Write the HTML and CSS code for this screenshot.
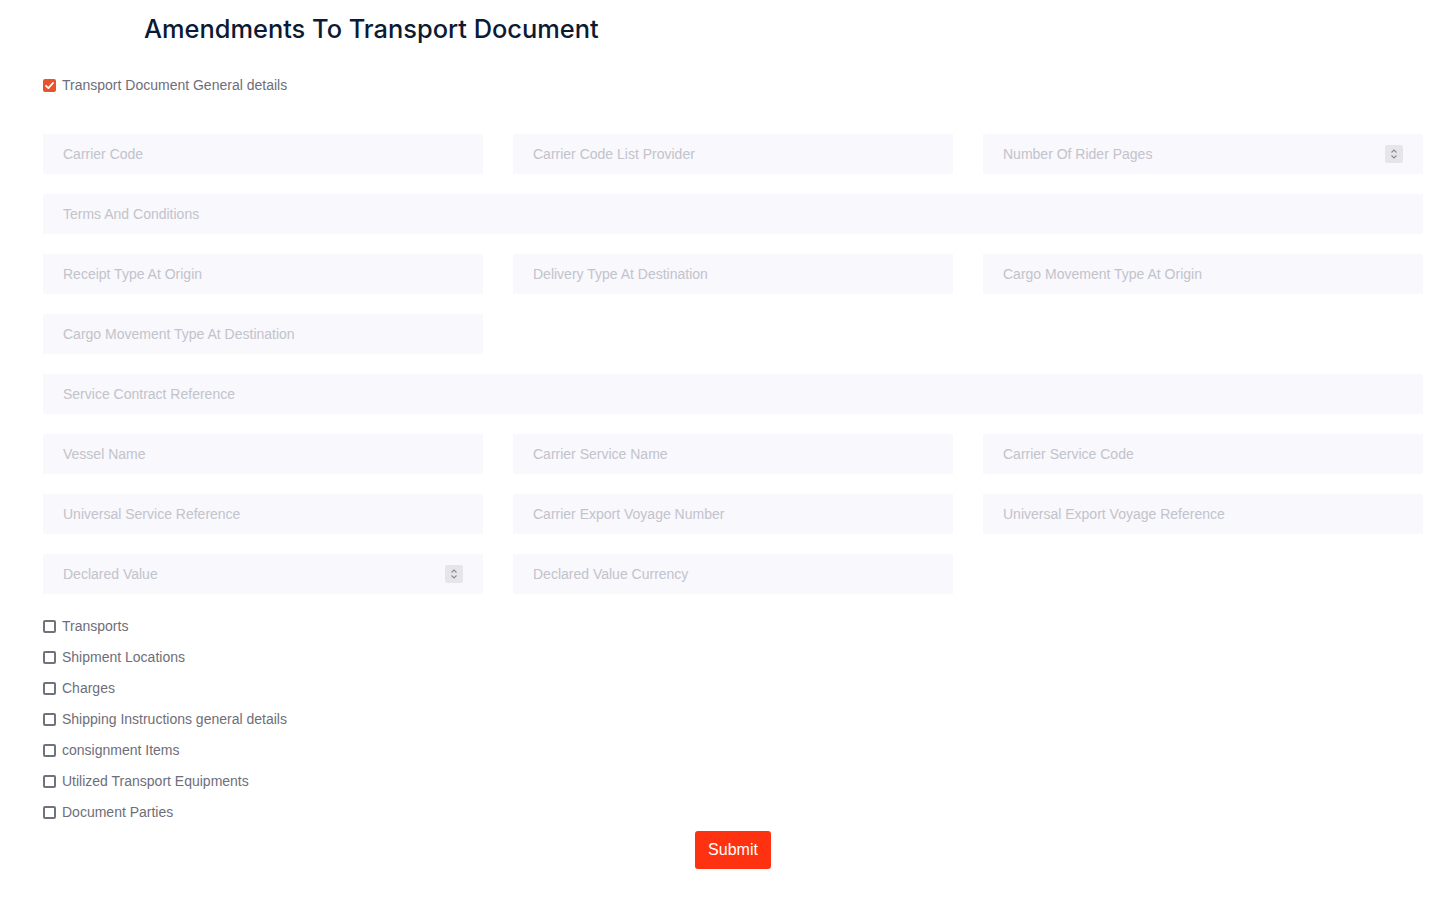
FILE: index.html
```html
<!DOCTYPE html>
<html>
<head>
<meta charset="utf-8">
<link rel="stylesheet" href="styles.css">
</head>
<body>
<div class="page">
  <h1 class="title">Amendments To Transport Document</h1>
  <label class="check"><span class="box checked"><svg viewBox="0 0 13 13" width="13" height="13"><path d="M3 6.8 L5.4 9.1 L10 4" fill="none" stroke="#fff" stroke-width="1.8" stroke-linecap="round" stroke-linejoin="round"/></svg></span>Transport Document General details</label>

  <div class="grid">
    <div class="field">Carrier Code</div>
    <div class="field">Carrier Code List Provider</div>
    <div class="field num">Number Of Rider Pages<span class="spin"><svg viewBox="0 0 18 18" width="18" height="18"><path d="M6.5 7.5 L9 5 L11.5 7.5 M6.5 10.5 L9 13 L11.5 10.5" fill="none" stroke="#8a8a92" stroke-width="1.1"/></svg></span></div>
    <div class="field full">Terms And Conditions</div>
    <div class="field">Receipt Type At Origin</div>
    <div class="field">Delivery Type At Destination</div>
    <div class="field">Cargo Movement Type At Origin</div>
    <div class="field">Cargo Movement Type At Destination</div>
    <div class="field full">Service Contract Reference</div>
    <div class="field">Vessel Name</div>
    <div class="field">Carrier Service Name</div>
    <div class="field">Carrier Service Code</div>
    <div class="field">Universal Service Reference</div>
    <div class="field">Carrier Export Voyage Number</div>
    <div class="field">Universal Export Voyage Reference</div>
    <div class="field num">Declared Value<span class="spin"><svg viewBox="0 0 18 18" width="18" height="18"><path d="M6.5 7.5 L9 5 L11.5 7.5 M6.5 10.5 L9 13 L11.5 10.5" fill="none" stroke="#8a8a92" stroke-width="1.1"/></svg></span></div>
    <div class="field">Declared Value Currency</div>
  </div>

  <div class="list">
    <label class="check"><span class="box"></span>Transports</label>
    <label class="check"><span class="box"></span>Shipment Locations</label>
    <label class="check"><span class="box"></span>Charges</label>
    <label class="check"><span class="box"></span>Shipping Instructions general details</label>
    <label class="check"><span class="box"></span>consignment Items</label>
    <label class="check"><span class="box"></span>Utilized Transport Equipments</label>
    <label class="check"><span class="box"></span>Document Parties</label>
  </div>

  <div class="actions"><button class="submit">Submit</button></div>
</div>
</body>
</html>
```
FILE: styles.css
```css
* { box-sizing: border-box; }
body {
  margin: 0;
  background: #fff;
  font-family: "Liberation Sans", Arial, sans-serif;
}
.page {
  width: 1380px;
  margin-left: 43px;
  padding-top: 13px;
}
.title {
  margin: 0 0 0 101px;
  font-family: "Inter", "Noto Sans", sans-serif;
  font-weight: 500;
  font-size: 25.4px;
  line-height: 32px;
  color: #0c1a33;
  letter-spacing: 0;
}
.check {
  display: flex;
  align-items: center;
  font-size: 14px;
  color: #6e6e7a;
  height: 20px;
}
.page > .check { margin-top: 30px; }
.box {
  width: 13px;
  height: 13px;
  border: 2px solid #72727c;
  border-radius: 2px;
  margin-right: 6px;
  display: inline-flex;
  flex: none;
}
.box.checked {
  background: #e9532b;
  border: none;
}
.grid {
  margin-top: 39px;
  display: grid;
  grid-template-columns: 440px 440px 440px;
  column-gap: 30px;
  row-gap: 20px;
}
.field {
  height: 40px;
  background: #f8f8fd;
  color: #c3c3cb;
  font-size: 14px;
  padding-left: 20px;
  padding-right: 20px;
  display: flex;
  align-items: center;
}
.field.full { grid-column: 1 / 4; }
.field.num { justify-content: space-between; }
.spin {
  width: 18px;
  height: 18px;
  background: #e6e6ea;
  border-radius: 2px;
  display: inline-flex;
}
.list {
  margin-top: 22px;
  display: flex;
  flex-direction: column;
  row-gap: 11px;
}
.actions {
  display: flex;
  justify-content: center;
  margin-top: 9px;
}
.submit {
  width: 76px;
  height: 38px;
  background: #fe3210;
  color: #fff;
  border: none;
  border-radius: 3px;
  font-family: "Liberation Sans", Arial, sans-serif;
  font-size: 16px;
  padding: 0;
}
```
